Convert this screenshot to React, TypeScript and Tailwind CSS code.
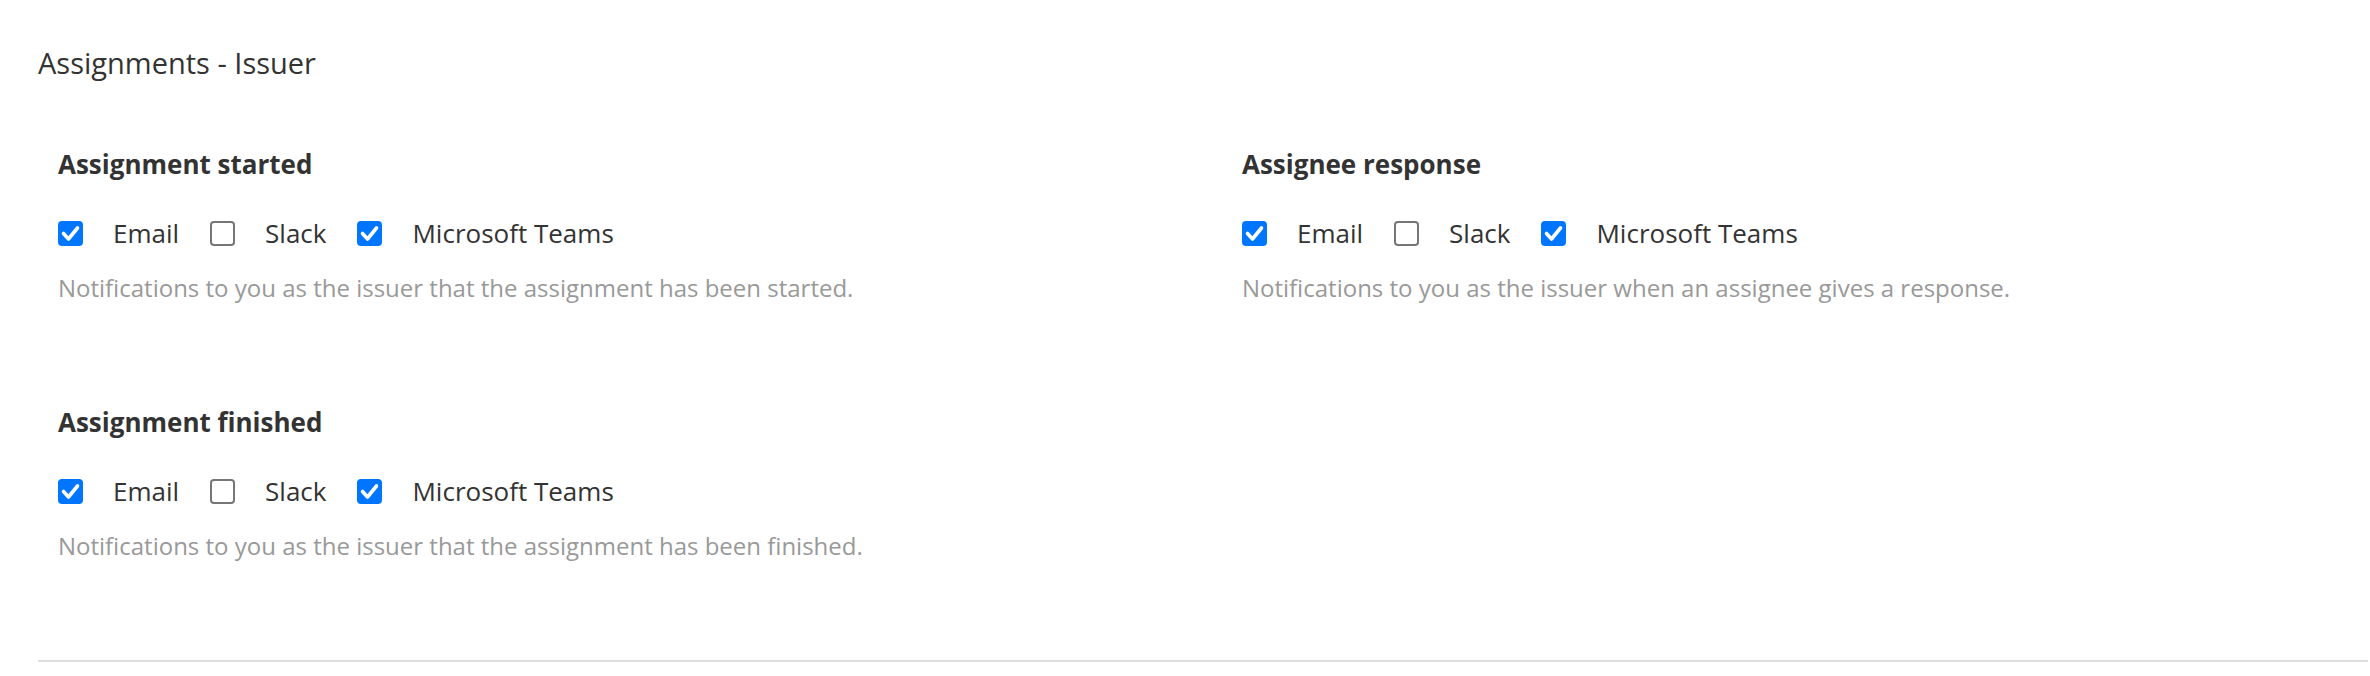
import React from 'react';

interface Channel {
  label: string;
  checked: boolean;
}

interface Setting {
  title: string;
  description: string;
  channels: Channel[];
}

const defaultChannels = (): Channel[] => [
  { label: 'Email', checked: true },
  { label: 'Slack', checked: false },
  { label: 'Microsoft Teams', checked: true },
];

const settings: Setting[] = [
  {
    title: 'Assignment started',
    description: 'Notifications to you as the issuer that the assignment has been started.',
    channels: defaultChannels(),
  },
  {
    title: 'Assignee response',
    description: 'Notifications to you as the issuer when an assignee gives a response.',
    channels: defaultChannels(),
  },
  {
    title: 'Assignment finished',
    description: 'Notifications to you as the issuer that the assignment has been finished.',
    channels: defaultChannels(),
  },
];

const CheckBox: React.FC<{ checked: boolean }> = ({ checked }) =>
  checked ? (
    <span className="w-[25px] h-[25px] rounded-[4px] bg-[#0075ff] flex items-center justify-center flex-shrink-0">
      <svg width="25" height="25" viewBox="0 0 25 25" fill="none">
        <path d="M5.5 12.5 L10.5 18 L19.5 7" stroke="#fff" strokeWidth="3.6" strokeLinecap="round" strokeLinejoin="round" />
      </svg>
    </span>
  ) : (
    <span className="w-[25px] h-[25px] rounded-[4px] border-2 border-[#767676] bg-white flex-shrink-0" />
  );

const SettingBlock: React.FC<{ setting: Setting }> = ({ setting }) => {
  return (
    <div>
      <h3 className="text-[26px] leading-[38px] font-bold text-[#333]">{setting.title}</h3>
      {/* Channel checkboxes */}
      <div className="flex items-center h-[36px] mt-[32px] gap-[31px]">
        {setting.channels.map((c) => (
          <label key={c.label} className="flex items-center gap-[30px]">
            <CheckBox checked={c.checked} />
            <span className="text-[26px] leading-[36px] text-[#333]">{c.label}</span>
          </label>
        ))}
      </div>
      <p className="text-[24px] leading-[34px] text-[#999] mt-[20px]">{setting.description}</p>
    </div>
  );
};

export default function App() {
  return (
    <div className="bg-white min-h-screen pl-[38px] pr-[2px] pt-[43px] font-['Open_Sans',sans-serif]">
      <h2 className="text-[29px] leading-[40px] text-[#333]">Assignments - Issuer</h2>

      <div className="grid grid-cols-[1184px_1fr] gap-y-[98px] pl-[20px] pt-[62px]">
        {settings.map((s) => (
          <SettingBlock key={s.title} setting={s} />
        ))}
      </div>

      <div className="h-[2px] bg-[#dddddd] mt-[97px]" />
    </div>
  );
}
